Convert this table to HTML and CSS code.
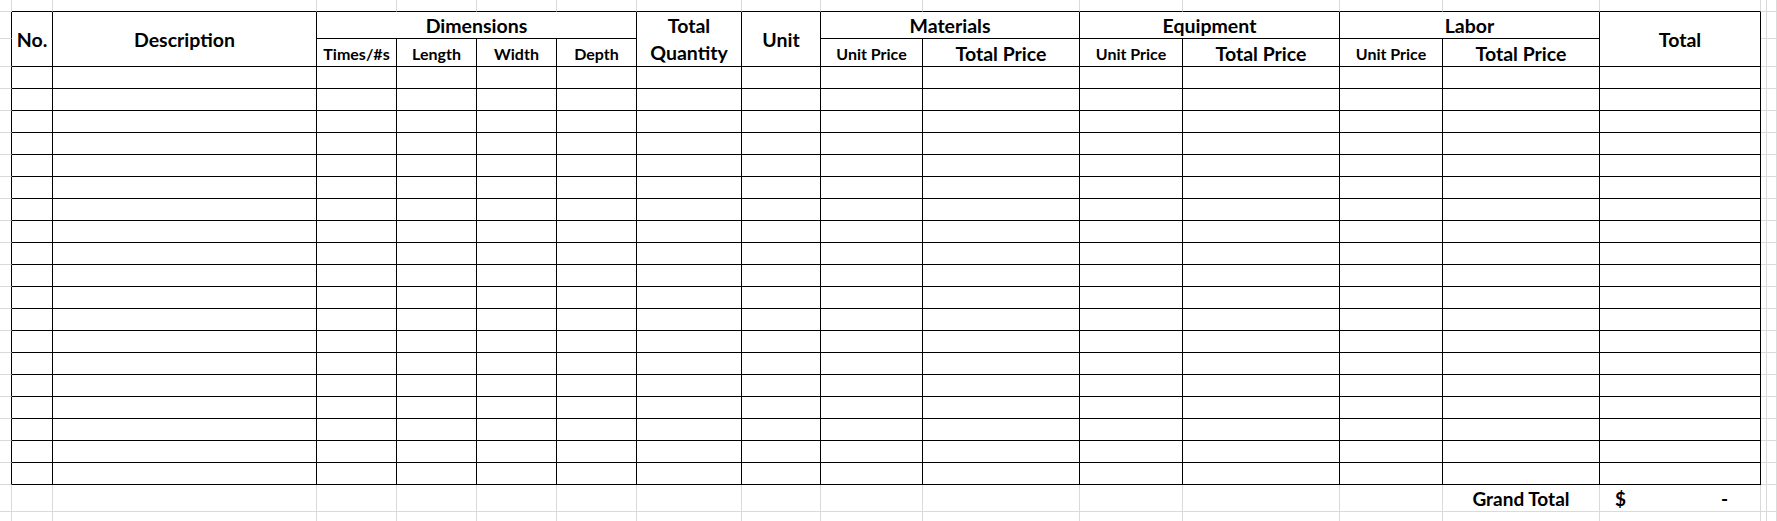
FILE: index.html
```html
<!DOCTYPE html>
<html lang="en">
<head>
<meta charset="utf-8">
<title>Cost Estimate Sheet</title>
<link rel="stylesheet" href="styles.css">
</head>
<body>
<table class="sheet">
  <colgroup>
    <col class="c-gut"><col class="c-no"><col class="c-desc"><col class="c-dim"><col class="c-dim"><col class="c-dim"><col class="c-dim"><col class="c-qty"><col class="c-unit"><col class="c-up"><col class="c-tp"><col class="c-up2"><col class="c-tp"><col class="c-up2"><col class="c-tp"><col class="c-total"><col class="c-x1"><col class="c-x2">
  </colgroup>
  <tbody class="top">
    <tr class="h-top"><td></td><td></td><td></td><td></td><td></td><td></td><td></td><td></td><td></td><td></td><td></td><td></td><td></td><td></td><td></td><td></td><td></td><td></td></tr>
  </tbody>
  <tbody class="grid head">
    <tr class="h1">
      <td></td>
      <th rowspan="2" class="big">No.</th>
      <th rowspan="2" class="big">Description</th>
      <th colspan="4" class="big">Dimensions</th>
      <th rowspan="2" class="big two">Total<br>Quantity</th>
      <th rowspan="2" class="big">Unit</th>
      <th colspan="2" class="big">Materials</th>
      <th colspan="2" class="big">Equipment</th>
      <th colspan="2" class="big">Labor</th>
      <th rowspan="2" class="big">Total</th>
      <td></td><td></td>
    </tr>
    <tr class="h2">
      <td></td>
      <th class="small">Times/#s</th>
      <th class="small">Length</th>
      <th class="small">Width</th>
      <th class="small">Depth</th>
      <th class="small">Unit Price</th>
      <th class="big">Total Price</th>
      <th class="small">Unit Price</th>
      <th class="big">Total Price</th>
      <th class="small">Unit Price</th>
      <th class="big">Total Price</th>
      <td></td><td></td>
    </tr>
  </tbody>
  <tbody class="grid rows">
    <tr><td></td><td></td><td></td><td></td><td></td><td></td><td></td><td></td><td></td><td></td><td></td><td></td><td></td><td></td><td></td><td></td><td></td><td></td></tr>
    <tr><td></td><td></td><td></td><td></td><td></td><td></td><td></td><td></td><td></td><td></td><td></td><td></td><td></td><td></td><td></td><td></td><td></td><td></td></tr>
    <tr><td></td><td></td><td></td><td></td><td></td><td></td><td></td><td></td><td></td><td></td><td></td><td></td><td></td><td></td><td></td><td></td><td></td><td></td></tr>
    <tr><td></td><td></td><td></td><td></td><td></td><td></td><td></td><td></td><td></td><td></td><td></td><td></td><td></td><td></td><td></td><td></td><td></td><td></td></tr>
    <tr><td></td><td></td><td></td><td></td><td></td><td></td><td></td><td></td><td></td><td></td><td></td><td></td><td></td><td></td><td></td><td></td><td></td><td></td></tr>
    <tr><td></td><td></td><td></td><td></td><td></td><td></td><td></td><td></td><td></td><td></td><td></td><td></td><td></td><td></td><td></td><td></td><td></td><td></td></tr>
    <tr><td></td><td></td><td></td><td></td><td></td><td></td><td></td><td></td><td></td><td></td><td></td><td></td><td></td><td></td><td></td><td></td><td></td><td></td></tr>
    <tr><td></td><td></td><td></td><td></td><td></td><td></td><td></td><td></td><td></td><td></td><td></td><td></td><td></td><td></td><td></td><td></td><td></td><td></td></tr>
    <tr><td></td><td></td><td></td><td></td><td></td><td></td><td></td><td></td><td></td><td></td><td></td><td></td><td></td><td></td><td></td><td></td><td></td><td></td></tr>
    <tr><td></td><td></td><td></td><td></td><td></td><td></td><td></td><td></td><td></td><td></td><td></td><td></td><td></td><td></td><td></td><td></td><td></td><td></td></tr>
    <tr><td></td><td></td><td></td><td></td><td></td><td></td><td></td><td></td><td></td><td></td><td></td><td></td><td></td><td></td><td></td><td></td><td></td><td></td></tr>
    <tr><td></td><td></td><td></td><td></td><td></td><td></td><td></td><td></td><td></td><td></td><td></td><td></td><td></td><td></td><td></td><td></td><td></td><td></td></tr>
    <tr><td></td><td></td><td></td><td></td><td></td><td></td><td></td><td></td><td></td><td></td><td></td><td></td><td></td><td></td><td></td><td></td><td></td><td></td></tr>
    <tr><td></td><td></td><td></td><td></td><td></td><td></td><td></td><td></td><td></td><td></td><td></td><td></td><td></td><td></td><td></td><td></td><td></td><td></td></tr>
    <tr><td></td><td></td><td></td><td></td><td></td><td></td><td></td><td></td><td></td><td></td><td></td><td></td><td></td><td></td><td></td><td></td><td></td><td></td></tr>
    <tr><td></td><td></td><td></td><td></td><td></td><td></td><td></td><td></td><td></td><td></td><td></td><td></td><td></td><td></td><td></td><td></td><td></td><td></td></tr>
    <tr><td></td><td></td><td></td><td></td><td></td><td></td><td></td><td></td><td></td><td></td><td></td><td></td><td></td><td></td><td></td><td></td><td></td><td></td></tr>
    <tr><td></td><td></td><td></td><td></td><td></td><td></td><td></td><td></td><td></td><td></td><td></td><td></td><td></td><td></td><td></td><td></td><td></td><td></td></tr>
    <tr><td></td><td></td><td></td><td></td><td></td><td></td><td></td><td></td><td></td><td></td><td></td><td></td><td></td><td></td><td></td><td></td><td></td><td></td></tr>
  </tbody>
  <tbody class="foot">
    <tr class="grand">
      <td></td><td></td><td></td><td></td><td></td><td></td><td></td><td></td><td></td><td></td><td></td><td></td><td></td><td></td>
      <td class="gt-label">Grand Total</td>
      <td class="gt-value"><div class="money"><span>$</span><span>-</span></div></td>
      <td></td><td></td>
    </tr>
    <tr class="after"><td></td><td></td><td></td><td></td><td></td><td></td><td></td><td></td><td></td><td></td><td></td><td></td><td></td><td></td><td></td><td></td><td></td><td></td></tr>
  </tbody>
</table>
</body>
</html>
```

FILE: styles.css
```css
* { box-sizing: border-box; }

html, body {
  margin: 0;
  padding: 0;
  background: #ffffff;
}

body {
  width: 1777px;
  height: 521px;
  overflow: hidden;
  font-family: Lato, "Open Sans", "Liberation Sans", sans-serif;
  color: #000000;
}

.sheet {
  border-collapse: separate;
  border-spacing: 0;
  table-layout: fixed;
  width: 1777px;
}

.c-gut { width: 12px; }
.c-no { width: 41px; }
.c-desc { width: 264px; }
.c-dim { width: 80px; }
.c-qty { width: 105px; }
.c-unit { width: 79px; }
.c-up { width: 102px; }
.c-up2 { width: 103px; }
.c-tp { width: 157px; }
.c-total { width: 161px; }
.c-x1 { width: 6px; }
.c-x2 { width: 10px; }

.sheet td,
.sheet th {
  padding: 0;
  border-top: 0;
  border-left: 0;
  border-right: 1px solid #dadada;
  border-bottom: 1px solid #dadada;
  font-weight: 700;
  text-align: center;
  vertical-align: middle;
  line-height: 1;
  white-space: nowrap;
  overflow: hidden;
}

/* real table cells: black borders */
.grid td,
.grid th {
  border-right-color: #000000;
  border-bottom-color: #000000;
}
.grid tr > :first-child {
  border-bottom-color: #dadada;
}
.grid tr > :nth-last-child(-n+2) {
  border-right-color: #dadada;
  border-bottom-color: #dadada;
}

/* top line of the table */
.top td:not(:first-child):nth-last-child(n+3) {
  border-bottom-color: #000000;
}

.h-top { height: 12px; }
.h1 { height: 27px; }
.h2 { height: 28px; }
.rows tr { height: 22px; }
.grand { height: 27px; }
.after { height: 22px; }

.sheet .big {
  font-size: 19.5px;
  padding-top: 2px;
}
.sheet .small {
  font-size: 16px;
  padding-top: 2px;
}
.sheet .two {
  line-height: 27px;
  padding-top: 0;
}

.sheet .gt-label {
  font-size: 19px;
}
.sheet .gt-value {
  font-size: 19px;
}
.money {
  display: flex;
  justify-content: space-between;
  padding: 0 32px 0 15px;
}
```
